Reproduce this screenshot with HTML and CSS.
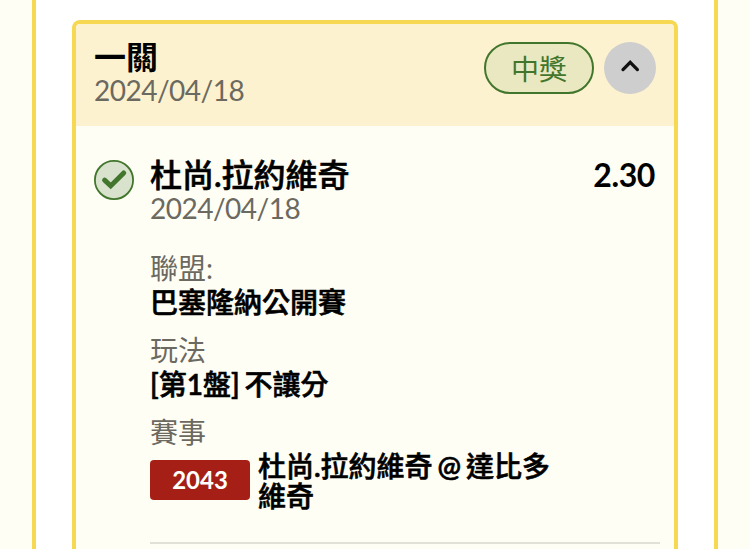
FILE: index.html
```html
<!DOCTYPE html>
<html lang="zh-Hant">
<head>
    <meta charset="UTF-8">
    <meta name="viewport" content="width=device-width, initial-scale=1.0">
    <title>投注紀錄</title>
    <link rel="stylesheet" href="styles.css">
</head>
<body>
    <div class="panel">
        <div class="ticket">
            <div class="ticket-header">
                <div class="ticket-title">
                    <h2>一關</h2>
                    <p class="date">2024/04/18</p>
                </div>
                <span class="status">中獎</span>
                <button class="toggle" type="button" aria-label="收合">
                    <svg width="20" height="18" viewBox="0 0 20 18"><path d="M3 10.6L10.2 3.4L17.4 10.6" fill="none" stroke="#111" stroke-width="3.3" stroke-linecap="round"/></svg>
                </button>
            </div>
            <div class="bet">
                <svg class="check" width="40" height="40" viewBox="0 0 40 40">
                    <circle cx="20" cy="20" r="19.1" fill="#d9e2cd" stroke="#42762d" stroke-width="1.8"/>
                    <path d="M10.6 20.2L16.7 25.9L29.7 13" fill="none" stroke="#42762d" stroke-width="5" stroke-linecap="round"/>
                </svg>
                <div class="bet-body">
                    <div class="bet-top">
                        <h3>杜尚.拉約維奇</h3>
                        <span class="odds">2.30</span>
                    </div>
                    <p class="date">2024/04/18</p>
                    <dl class="details">
                        <dt>聯盟:</dt>
                        <dd>巴塞隆納公開賽</dd>
                        <dt>玩法</dt>
                        <dd>[第1盤] 不讓分</dd>
                        <dt>賽事</dt>
                    </dl>
                    <div class="match">
                        <span class="code">2043</span>
                        <span class="teams">杜尚.拉約維奇 @ 達比多維奇</span>
                    </div>
                </div>
            </div>
        </div>
    </div>
</body>
</html>
```
FILE: styles.css
```css
* {
    box-sizing: border-box;
    margin: 0;
    padding: 0;
}
body {
    height: 549px;
    overflow: hidden;
    padding: 0 32px;
    background-color: #fffef5;
    color: #000;
    font-family: Lato, "Noto Sans CJK TC", sans-serif;
}
.panel {
    height: 549px;
    padding: 20px 36px 0;
    background-color: #fff;
    border: solid #f6d852;
    border-width: 0 4px;
}
.ticket {
    height: 529px;
    border: 4px solid #f6d852;
    border-bottom: none;
    border-radius: 8px 8px 0 0;
    background-color: #fffef5;
    overflow: hidden;
}
.ticket-header {
    display: flex;
    align-items: flex-start;
    height: 102px;
    padding: 18px 18px 0;
    background-color: #fdf2cf;
}
.ticket-title {
    flex: 1;
}
h2 {
    font-size: 32px;
    line-height: 30px;
}
.date {
    margin-top: 1px;
    color: #6b6960;
    font-size: 28px;
    letter-spacing: -0.5px;
    line-height: 34px;
}
.status {
    width: 110px;
    height: 52px;
    border: 2px solid #42762d;
    border-radius: 26px;
    background-color: #e9e8c0;
    color: #42762d;
    font-size: 28px;
    line-height: 50px;
    text-align: center;
}
.toggle {
    display: flex;
    align-items: center;
    justify-content: center;
    width: 52px;
    height: 52px;
    margin-left: 10px;
    border: none;
    border-radius: 50%;
    background-color: #cecece;
}
.bet {
    display: flex;
    gap: 16px;
    padding: 34px 14px 0 18px;
}
.check {
    flex: none;
}
.bet-body {
    flex: 1;
    height: 384px;
    border-bottom: 2px solid #e1e1d8;
}
.bet-top {
    display: flex;
    justify-content: space-between;
    padding-right: 5px;
    line-height: 30px;
}
h3,
.odds {
    font-size: 32px;
}
.odds {
    font-weight: bold;
    letter-spacing: -0.4px;
}
h3,
dd,
.teams {
    font-family: Lato, "Noto Sans CJK TC Medium", "Noto Sans CJK TC", sans-serif;
    font-weight: 600;
    -webkit-text-stroke: 0.6px #000;
}
.details {
    margin-top: 26px;
    font-size: 28px;
    line-height: 34px;
    word-spacing: -2px;
}
dt {
    color: #6b6960;
}
dd {
    margin-bottom: 14px;
}
.match {
    display: flex;
    align-items: center;
    gap: 8px;
    padding-top: 2px;
}
.code {
    width: 100px;
    height: 40px;
    margin-bottom: 2px;
    border-radius: 4px;
    background-color: #a61f16;
    color: #fff;
    font-size: 24px;
    font-weight: bold;
    line-height: 40px;
    text-align: center;
}
.teams {
    width: 300px;
    font-size: 28px;
    line-height: 30px;
    word-spacing: -2px;
}
```
